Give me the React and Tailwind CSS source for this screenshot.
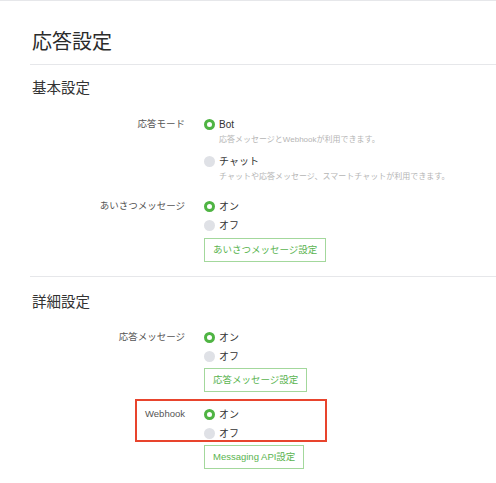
import React from 'react';

const font = { fontFamily: '"Liberation Sans", "Noto Sans CJK JP", sans-serif' };

const Radio = ({ checked }) => (
  checked ? (
    <span className="inline-block w-[11px] h-[11px] rounded-full border-[3px] border-[#4fb443] bg-white shrink-0" />
  ) : (
    <span className="inline-block w-[11px] h-[11px] rounded-full bg-[#dfe1e6] shrink-0" />
  )
);

const Option = ({ checked, label, desc, className = '' }) => (
  <div className={className}>
    <div className="flex items-center h-4 gap-[4px]">
      <Radio checked={checked} />
      <span className="text-[10px] text-[#333]">{label}</span>
    </div>
    {desc && (
      <div className="pl-[15px] h-[14px] mt-[1px] leading-[14px] text-[8px] text-[#b5b5b5] whitespace-nowrap">{desc}</div>
    )}
  </div>
);

const Row = ({ label, children, className = '' }) => (
  <div className={`flex ${className}`}>
    <div className="w-[174px] pr-[19px] text-right h-4 leading-4 text-[9.5px] text-[#555] shrink-0">{label}</div>
    <div className="flex flex-col">{children}</div>
  </div>
);

const SettingButton = ({ children, className = '' }) => (
  <button className={`h-[24px] px-[8px] border border-[#a3d89c] text-[9.5px] text-[#5ab44f] bg-white self-start whitespace-nowrap ${className}`}>
    {children}
  </button>
);

export default function App() {
  return (
    <div style={font} className="w-[496px] h-[483px] bg-white border-t border-[#e6e7ea] overflow-hidden">
      <div className="pl-[30px]">
        <h1 className="pt-[27px] pl-[2px] h-[64px] text-[20px] leading-[28px] text-[#2b2b2b] font-normal border-b border-[#e6e7ea]">
          応答設定
        </h1>

        <h2 className="mt-[13px] pl-[2px] text-[14.5px] leading-[20px] text-[#333]">基本設定</h2>

        <Row label="応答モード" className="mt-[18px]">
          <Option checked label="Bot" desc="応答メッセージとWebhookが利用できます。" />
          <Option label="チャット" desc="チャットや応答メッセージ、スマートチャットが利用できます。" className="mt-[6px]" />
        </Row>

        <Row label="あいさつメッセージ" className="mt-[14px]">
          <Option checked label="オン" />
          <Option label="オフ" className="mt-[3px]" />
          <SettingButton className="mt-[5px]">あいさつメッセージ設定</SettingButton>
        </Row>

        <div className="mt-[14px] border-b border-[#e6e7ea]" />

        <h2 className="mt-[15px] pl-[2px] text-[14.5px] leading-[20px] text-[#333]">詳細設定</h2>

        <Row label="応答メッセージ" className="mt-[17px]">
          <Option checked label="オン" />
          <Option label="オフ" className="mt-[3px]" />
          <SettingButton className="mt-[4px]">応答メッセージ設定</SettingButton>
        </Row>

        <div className="relative mt-[14px]">
          <div className="absolute left-[105px] top-[-7px] w-[192px] h-[43px] border-2 border-[#e8442d] pointer-events-none" />
          <Row label="Webhook">
            <Option checked label="オン" />
            <Option label="オフ" className="mt-[3px]" />
            <SettingButton className="mt-[4px]">Messaging API設定</SettingButton>
          </Row>
        </div>
      </div>
    </div>
  );
}
